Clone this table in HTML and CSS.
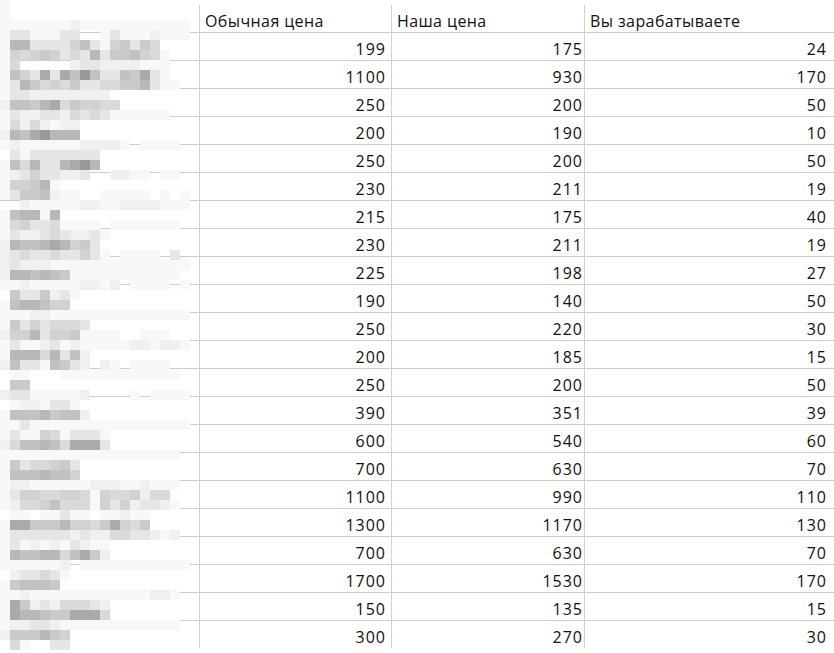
FILE: index.html
```html
<!DOCTYPE html>
<html lang="ru">
<head>
<meta charset="utf-8">
<title>Цены</title>
<link rel="stylesheet" href="styles.css">
</head>
<body>
<div class="sheet">
  <div class="row head">
    <div class="cell name"></div>
    <div class="cell c2">Обычная цена</div>
    <div class="cell c3">Наша цена</div>
    <div class="cell c4">Вы зарабатываете</div>
  </div>
  <div class="row"><div class="cell name"></div><div class="cell c2 num">199</div><div class="cell c3 num">175</div><div class="cell c4 num">24</div></div>
  <div class="row"><div class="cell name"></div><div class="cell c2 num">1100</div><div class="cell c3 num">930</div><div class="cell c4 num">170</div></div>
  <div class="row"><div class="cell name"></div><div class="cell c2 num">250</div><div class="cell c3 num">200</div><div class="cell c4 num">50</div></div>
  <div class="row"><div class="cell name"></div><div class="cell c2 num">200</div><div class="cell c3 num">190</div><div class="cell c4 num">10</div></div>
  <div class="row"><div class="cell name"></div><div class="cell c2 num">250</div><div class="cell c3 num">200</div><div class="cell c4 num">50</div></div>
  <div class="row"><div class="cell name"></div><div class="cell c2 num">230</div><div class="cell c3 num">211</div><div class="cell c4 num">19</div></div>
  <div class="row"><div class="cell name"></div><div class="cell c2 num">215</div><div class="cell c3 num">175</div><div class="cell c4 num">40</div></div>
  <div class="row"><div class="cell name"></div><div class="cell c2 num">230</div><div class="cell c3 num">211</div><div class="cell c4 num">19</div></div>
  <div class="row"><div class="cell name"></div><div class="cell c2 num">225</div><div class="cell c3 num">198</div><div class="cell c4 num">27</div></div>
  <div class="row"><div class="cell name"></div><div class="cell c2 num">190</div><div class="cell c3 num">140</div><div class="cell c4 num">50</div></div>
  <div class="row"><div class="cell name"></div><div class="cell c2 num">250</div><div class="cell c3 num">220</div><div class="cell c4 num">30</div></div>
  <div class="row"><div class="cell name"></div><div class="cell c2 num">200</div><div class="cell c3 num">185</div><div class="cell c4 num">15</div></div>
  <div class="row"><div class="cell name"></div><div class="cell c2 num">250</div><div class="cell c3 num">200</div><div class="cell c4 num">50</div></div>
  <div class="row"><div class="cell name"></div><div class="cell c2 num">390</div><div class="cell c3 num">351</div><div class="cell c4 num">39</div></div>
  <div class="row"><div class="cell name"></div><div class="cell c2 num">600</div><div class="cell c3 num">540</div><div class="cell c4 num">60</div></div>
  <div class="row"><div class="cell name"></div><div class="cell c2 num">700</div><div class="cell c3 num">630</div><div class="cell c4 num">70</div></div>
  <div class="row"><div class="cell name"></div><div class="cell c2 num">1100</div><div class="cell c3 num">990</div><div class="cell c4 num">110</div></div>
  <div class="row"><div class="cell name"></div><div class="cell c2 num">1300</div><div class="cell c3 num">1170</div><div class="cell c4 num">130</div></div>
  <div class="row"><div class="cell name"></div><div class="cell c2 num">700</div><div class="cell c3 num">630</div><div class="cell c4 num">70</div></div>
  <div class="row"><div class="cell name"></div><div class="cell c2 num">1700</div><div class="cell c3 num">1530</div><div class="cell c4 num">170</div></div>
  <div class="row"><div class="cell name"></div><div class="cell c2 num">150</div><div class="cell c3 num">135</div><div class="cell c4 num">15</div></div>
  <div class="row last"><div class="cell name"></div><div class="cell c2 num">300</div><div class="cell c3 num">270</div><div class="cell c4 num">30</div></div>
</div>
<div class="mosaic" id="mosaic" aria-hidden="true"></div>
<script src="mosaic.js"></script>
</body>
</html>
```

FILE: styles.css
```css
* { box-sizing: border-box; }
html, body {
  margin: 0;
  padding: 0;
  background: #ffffff;
}
body {
  position: relative;
  width: 834px;
  height: 653px;
  overflow: hidden;
  font-family: "Open Sans", "Noto Sans", sans-serif;
  font-size: 16px;
  color: #111111;
}
.sheet {
  padding-top: 5px;
  display: flex;
  flex-direction: column;
}
.row {
  display: grid;
  grid-template-columns: 200px 192px 193px 1fr;
  height: 28px;
  border-bottom: 1px solid #cdcdcd;
}
.row.last {
  border-bottom: none;
  height: 27px;
}
.cell {
  display: flex;
  align-items: flex-end;
  border-right: 1px solid #d2d2d2;
  line-height: 20px;
  padding-bottom: 1px;
  letter-spacing: 0.4px;
  white-space: nowrap;
}
.cell.c4 { border-right: none; }
.c2, .c3, .c4 { padding-left: 5px; }
.num { justify-content: flex-end; letter-spacing: 1px; }
.c2.num { padding-right: 5px; }
.c3.num { padding-right: 1px; }
.c4.num { padding-right: 7px; }
.mosaic {
  position: absolute;
  left: 0;
  top: 0;
  display: grid;
  grid-template-columns: repeat(19, 10px);
  grid-auto-rows: 10px;
  width: 190px;
}
.px { width: 10px; height: 10px; }
```

FILE: mosaic.js
```js
(function () {
  var shades = ['#ffffff','#f8f8f8','#f0f0f0','#e6e6e6','#dadada','#d2d2d2','#cacaca','#c2c2c2','#b8b8b8','#aaaaaa','#999999'];
  var rows = [
    "1000000000000000000",
    "1000000000000000000",
    "1111111211111111111",
    "1331113300131112111",
    "1883333573156364000",
    "1545653438366754100",
    "1400000233222211100",
    "17539397a7337693100",
    "1386454633446683110",
    "1332222222200000000",
    "2776894655440000000",
    "1322332434311111100",
    "1424212200000000000",
    "2879a88800000000000",
    "1211111122221011110",
    "0313333333000000000",
    "17483389a8000000000",
    "1235332230022110110",
    "1556810000000000000",
    "1366721100111110101",
    "0021111122112222111",
    "1788180000000000000",
    "1453341111011111110",
    "1322343223100000000",
    "2877898563000000000",
    "2343343353101111030",
    "2322211111111111111",
    "2887876111111111110",
    "1121111122120111101",
    "0633623100000000000",
    "1788755000000000000",
    "1112211111111111111",
    "1635344430000000000",
    "2558355611110011100",
    "1311231211111221221",
    "1888483720000000000",
    "2733176320210111100",
    "0110001111111111110",
    "0660000000000000000",
    "2331111120000101111",
    "0122133100000000000",
    "1777867720000000000",
    "1131111111111111111",
    "1311541333100000000",
    "2477874999300000000",
    "1111111111111111110",
    "1634456300000000000",
    "1777877500000000000",
    "1221111112221121110",
    "1355445541544524400",
    "1244574441535233210",
    "0110113110112110000",
    "1996668554695460000",
    "1333333232244332120",
    "1312121321100000000",
    "1877884796200000000",
    "1111112011111111111",
    "0233431000000000000",
    "1677760000000000000",
    "1121111111111112210",
    "1962324443200000000",
    "1988766999400000000",
    "1223321111111111110",
    "2666865000000000000",
    "0410033000000000000"
  ];
  var box = document.getElementById('mosaic');
  var frag = document.createDocumentFragment();
  rows.forEach(function (r) {
    for (var i = 0; i < 19; i++) {
      var d = document.createElement('div');
      d.className = 'px';
      var ch = r.charAt(i) || '0';
      var lvl = ch === 'a' ? 10 : parseInt(ch, 10);
      if (lvl > 0) d.style.background = shades[lvl];
      frag.appendChild(d);
    }
  });
  box.appendChild(frag);
})();
```
